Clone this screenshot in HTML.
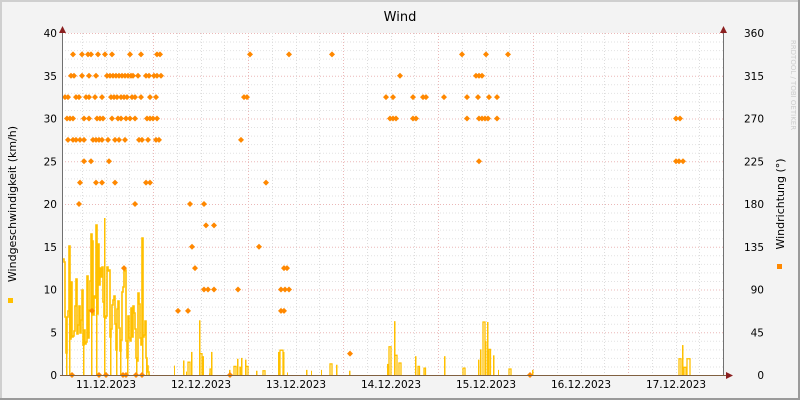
<!DOCTYPE html>
<html><head><meta charset="utf-8"><style>
html,body{margin:0;padding:0;background:#f3f3f3;}
svg{display:block;font-family:"DejaVu Sans","Liberation Sans",sans-serif;}
</style></head><body>
<svg id="s" width="800" height="400" xmlns="http://www.w3.org/2000/svg">
<rect x="0" y="0" width="800" height="400" fill="#f3f3f3"/>
<rect x="0" y="0" width="800" height="2" fill="#cfcfcf"/>
<rect x="0" y="0" width="2" height="400" fill="#cfcfcf"/>
<rect x="798" y="0" width="2" height="400" fill="#9a9a9a"/>
<rect x="0" y="398" width="800" height="2" fill="#9a9a9a"/>
<rect x="62" y="33" width="661" height="342" fill="#ffffff"/>
<g id="grid"></g>
<g id="data"></g>
<text x="400" y="21" font-size="13" text-anchor="middle" fill="#000">Wind</text>
<g id="labels" font-size="10.5" fill="#000"></g>
<text transform="translate(16,204) rotate(-90)" font-size="11" text-anchor="middle" fill="#000">Windgeschwindigkeit (km/h)</text>
<rect x="8" y="298" width="5" height="5" fill="#ffc000"/>
<text transform="translate(784,204) rotate(-90)" font-size="11" text-anchor="middle" fill="#000">Windrichtung (°)</text>
<rect x="777" y="264" width="5" height="5" fill="#ff8800"/>
<text transform="translate(791,85) rotate(90)" font-size="7" text-anchor="middle" fill="#cccccc">RRDTOOL / TOBI OETIKER</text>
</svg>
<script>
var NS="http://www.w3.org/2000/svg";
function el(p,t,a){var e=document.createElementNS(NS,t);for(var k in a)e.setAttribute(k,a[k]);p.appendChild(e);return e;}
var g=document.getElementById('grid'),d=document.getElementById('data'),L=document.getElementById('labels');
function Y(v){return 375-v*8.55;}
for(var v=1;v<=40;v++){var y=Y(v);var maj=v%5==0;
el(g,'line',{x1:62,x2:723,y1:y+0.5,y2:y+0.5,stroke:maj?'#ebb8b8':'#e2e2e2','stroke-dasharray':'1,2','stroke-width':1});}
for(var k=-3;k<24;k++){var x=153+k*23.75;if(x<63||x>722)continue;var maj=(k%4==0);
el(g,'line',{x1:Math.round(x)+0.5,x2:Math.round(x)+0.5,y1:33,y2:375,stroke:maj?'#ebb8b8':'#dcdcdc','stroke-dasharray':'1,2'});}
for(var v=0;v<=40;v+=5){var t=el(L,'text',{x:57,y:Y(v)+4,'text-anchor':'end'});t.textContent=v;
var t2=el(L,'text',{x:764,y:Y(v)+4,'text-anchor':'end'});t2.textContent=v*9;}
var days=['11.12.2023','12.12.2023','13.12.2023','14.12.2023','15.12.2023','16.12.2023','17.12.2023'];
for(var i=0;i<7;i++){var t=el(L,'text',{x:106+i*95,y:388,'text-anchor':'middle'});t.textContent=days[i];}
var pts=[[62,259],[64,262],[65,317],[66,353],[67,317],[68,311],[69,246],[70,339],[71,282],[72,337],[73,336],[74,331],[75,306],[76,279],[77,334],[78,325],[79,306],[80,333],[81,320],[82,290],[83,345],[84,330],[85,344],[86,342],[87,276],[88,338],[89,310],[90,281],[91,234],[92,241],[93,315],[94,296],[95,298],[96,225],[97,314],[98,244],[99,285],[100,268],[101,277],[102,267],[103,302],[104,317],[105,318],[106,316],[107,267],[108,271],[109,270],[110,337],[111,329],[112,305],[113,300],[114,296],[115,324],[116,350],[117,309],[118,301],[119,328],[120,351],[121,340],[122,292],[123,287],[124,271],[125,270],[126,341],[127,358],[128,316],[129,338],[130,341],[131,308],[132,337],[133,306],[134,313],[135,329],[136,358],[137,361],[138,293],[139,304],[140,338],[141,345],[142,238],[143,337],[144,335],[145,321],[146,358],[147,366],[148,372],[149,375]];
var s='';pts.forEach(function(p,i){if(i==0)s+='M'+p[0]+','+p[1];else s+='H'+p[0]+'V'+p[1];});s+='H150';
el(d,'path',{d:s,fill:'none',stroke:'#ffc000','stroke-width':1.6});
[[66,353],[69,246],[83,345],[91,234],[96,225],[104,218],[110,337],[116,350],[120,351],[127,358],[136,358],[142,238],[146,358]].forEach(function(p){el(d,'rect',{x:p[0],y:p[1],width:1.5,height:375-p[1],fill:'#ffc000'});});
var bars=[[174,1,1.1,1],[183,1.5,1.7,1],[186,1,0.4,1],[188,2,1.5,0],[191,1.5,2.7,1],[199,1.5,6.4,1],[200,2,2.5,0],[202,2,2.2,1],[209,1,0.2,1],[210,1.5,0.7,0],[211,1.5,2.7,1],
[229,1.5,0.6,1],[234,2,1,0],[237,1.5,1.9,1],[240,1,0.9,0],[241,1.5,2,1],[245,1.5,1.8,1],[246,2,1,0],[256,1.5,0.5,1],[263,2,0.5,0],[278,2,2.7,1],[280,3,2.9,0],[283,1.5,2.7,1],[287,1,0.3,1],[306,1.5,0.6,1],[311,1,0.5,1],[321,1,0.6,1],[330,2,1.3,0],[336,1.5,1.2,1],[349,1.5,0.5,1],
[387,1.5,1.3,1],[389,2,3.3,0],[394,1.5,6.3,1],[395,2,2.3,0],[399,2,1.4,0],[415,1.5,2.2,1],[418,1.5,1,0],[424,1.5,0.8,0],[444,1.5,2.2,1],[463,2,0.8,0],[478,1.5,1.8,1],[480,1.5,3,1],[483,2,6.2,0],[485,1.5,4,1],[487,1.5,6.2,1],[489,1.5,3,0],[493,1.5,2.3,1],[498,1,0.6,1],[509,2,0.7,0],[532,1.5,0.6,1],
[679,2,1.9,0],[682,1.5,3.5,1],[684,2,0.9,0],[687,3,1.9,0]];
bars.forEach(function(b){var y=Y(b[2]);if(b[3])el(d,'rect',{x:b[0],y:y,width:b[1],height:375-y,fill:'#ffc000'});
else el(d,'path',{d:'M'+b[0]+',375V'+y+'H'+(b[0]+b[1])+'V375',fill:'none',stroke:'#ffc000','stroke-width':1.3});});
var rows={37.5:[73,82,88,91,98,105,112,130,141,157,160,250,289,332,462,486,508],
35:[71,74,82,89,96,107,110,113,116,119,122,125,128,131,133,138,146,149,154,157,161,400,476,479,482],
32.5:[65,68,76,79,86,89,95,102,111,114,117,121,124,127,132,135,141,150,156,244,247,386,393,413,423,426,444,467,478,489,497],
30:[67,70,73,84,89,97,100,103,112,118,121,126,130,135,147,150,153,157,390,393,396,413,416,467,479,482,485,488,497,676,680],
27.5:[68,73,76,80,84,93,96,99,102,108,115,119,125,139,142,148,156,159,241],
25:[84,91,109,479,676,679,683],22.5:[80,96,102,115,146,150,266],20:[79,135,190,204],17.5:[206,214],15:[192,259],12.5:[124,195,284,287],
10:[204,208,214,238,281,285,289],7.5:[92,178,188,281,284],2.5:[350],0:[72,99,106,123,126,136,142,230,530]};
for(var r in rows){var y=Y(parseFloat(r));rows[r].forEach(function(x){
el(d,'path',{d:'M'+(x-3)+','+y+'L'+x+','+(y-3)+'L'+(x+3)+','+y+'L'+x+','+(y+3)+'Z',fill:'#ff8800'});});}
el(d,'line',{x1:62.5,x2:62.5,y1:30,y2:376,stroke:'#707070','stroke-width':1});
el(d,'line',{x1:723.5,x2:723.5,y1:30,y2:376,stroke:'#707070','stroke-width':1});
el(d,'line',{x1:60,x2:727,y1:375.5,y2:375.5,stroke:'#806040','stroke-width':1});
el(d,'path',{d:'M59,33L62.5,26L66,33Z',fill:'#8b2020'});
el(d,'path',{d:'M720,33L723.5,26L727,33Z',fill:'#8b2020'});
el(d,'path',{d:'M726,372L733,375.5L726,379Z',fill:'#8b2020'});
</script>
</body></html>
